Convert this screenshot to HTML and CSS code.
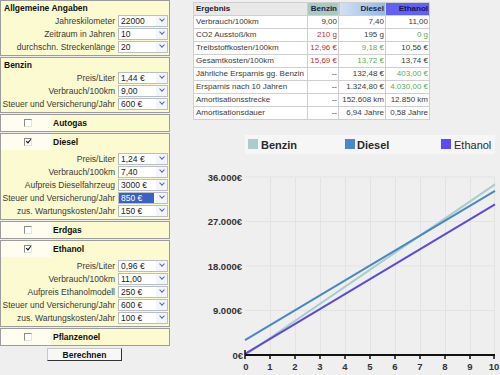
FILE: index.html
```html
<!DOCTYPE html>
<html lang="de">
<head>
    <meta charset="UTF-8">
    <title>Kraftstoffrechner</title>
    <link rel="stylesheet" href="styles.css">
</head>
<body>
<div class="page">
    <div class="form">
        <div class="panel">
            <h3>Allgemeine Angaben</h3>
            <div class="row"><label>Jahreskilometer</label><div class="sel"><span class="val">22000</span><span class="arrow"></span></div></div>
            <div class="row"><label>Zeitraum in Jahren</label><div class="sel"><span class="val">10</span><span class="arrow"></span></div></div>
            <div class="row"><label>durchschn. Streckenlänge</label><div class="sel"><span class="val">20</span><span class="arrow"></span></div></div>
        </div>
        <div class="panel">
            <h3>Benzin</h3>
            <div class="row"><label>Preis/Liter</label><div class="sel"><span class="val">1,44 €</span><span class="arrow"></span></div></div>
            <div class="row"><label>Verbrauch/100km</label><div class="sel"><span class="val">9,00</span><span class="arrow"></span></div></div>
            <div class="row"><label>Steuer und Versicherung/Jahr</label><div class="sel"><span class="val">600 €</span><span class="arrow"></span></div></div>
        </div>
        <div class="panel single">
            <div class="check"><span class="cb-cell"><span class="cb"></span></span><b>Autogas</b></div>
        </div>
        <div class="panel">
            <div class="check head"><span class="cb-cell"><span class="cb on"></span></span><b>Diesel</b></div>
            <div class="row"><label>Preis/Liter</label><div class="sel"><span class="val">1,24 €</span><span class="arrow"></span></div></div>
            <div class="row"><label>Verbrauch/100km</label><div class="sel"><span class="val">7,40</span><span class="arrow"></span></div></div>
            <div class="row"><label>Aufpreis Dieselfahrzeug</label><div class="sel"><span class="val">3000 €</span><span class="arrow"></span></div></div>
            <div class="row"><label>Steuer und Versicherung/Jahr</label><div class="sel"><span class="val hl">850 €</span><span class="arrow"></span></div></div>
            <div class="row"><label>zus. Wartungskosten/Jahr</label><div class="sel"><span class="val">150 €</span><span class="arrow"></span></div></div>
        </div>
        <div class="panel single">
            <div class="check"><span class="cb-cell"><span class="cb"></span></span><b>Erdgas</b></div>
        </div>
        <div class="panel">
            <div class="check head"><span class="cb-cell"><span class="cb on"></span></span><b>Ethanol</b></div>
            <div class="row"><label>Preis/Liter</label><div class="sel"><span class="val">0,96 €</span><span class="arrow"></span></div></div>
            <div class="row"><label>Verbrauch/100km</label><div class="sel"><span class="val">11,00</span><span class="arrow"></span></div></div>
            <div class="row"><label>Aufpreis Ethanolmodell</label><div class="sel"><span class="val">250 €</span><span class="arrow"></span></div></div>
            <div class="row"><label>Steuer und Versicherung/Jahr</label><div class="sel"><span class="val">600 €</span><span class="arrow"></span></div></div>
            <div class="row"><label>zus. Wartungskosten/Jahr</label><div class="sel"><span class="val">100 €</span><span class="arrow"></span></div></div>
        </div>
        <div class="panel single">
            <div class="check"><span class="cb-cell"><span class="cb"></span></span><b>Pflanzenoel</b></div>
        </div>
        <button class="calc">Berechnen</button>
    </div>

    <div class="results">
        <table class="res">
            <colgroup><col class="c-label"><col class="c-benzin"><col class="c-diesel"><col class="c-ethanol"></colgroup>
            <tr><th class="h-label">Ergebnis</th><th class="h-benzin">Benzin</th><th class="h-diesel">Diesel</th><th class="h-ethanol">Ethanol</th></tr>
            <tr><td>Verbrauch/100km</td><td>9,00</td><td>7,40</td><td>11,00</td></tr>
            <tr><td>CO2 Ausstoß/km</td><td class="bad">210 g</td><td>195 g</td><td class="good">0 g</td></tr>
            <tr><td>Treibstoffkosten/100km</td><td class="bad">12,96 €</td><td class="good">9,18 €</td><td>10,56 €</td></tr>
            <tr><td>Gesamtkosten/100km</td><td class="bad">15,69 €</td><td class="good">13,72 €</td><td>13,74 €</td></tr>
            <tr><td>Jährliche Ersparnis gg. Benzin</td><td>--</td><td>132,48 €</td><td class="good">403,00 €</td></tr>
            <tr><td>Ersparnis nach 10 Jahren</td><td>--</td><td>1.324,80 €</td><td class="good">4.030,00 €</td></tr>
            <tr><td>Amortisationsstrecke</td><td>--</td><td>152.608 km</td><td>12.850 km</td></tr>
            <tr><td>Amortisationsdauer</td><td>--</td><td>6,94 Jahre</td><td>0,58 Jahre</td></tr>
        </table>

        <svg class="chart" width="310" height="245" viewBox="0 0 310 245">
            <!-- legend -->
            <rect x="55" y="6" width="250" height="19" fill="#f6f6f6"/>
            <rect x="58" y="10" width="10" height="10" fill="#a9cccc"/>
            <text x="71" y="19.5" class="lg b">Benzin</text>
            <rect x="155" y="10" width="10" height="10" fill="#4a88cc"/>
            <text x="167" y="19.5" class="lg b">Diesel</text>
            <rect x="251" y="10" width="10" height="10" fill="#5a4cf0"/>
            <text x="264" y="19.5" class="lg">Ethanol</text>

            <!-- grid -->
            <g stroke="#e3e3e3" stroke-width="1">
                <line x1="55" y1="48" x2="305" y2="48"/>
                <line x1="55" y1="92.5" x2="305" y2="92.5"/>
                <line x1="55" y1="137" x2="305" y2="137"/>
                <line x1="55" y1="181.5" x2="305" y2="181.5"/>
                <line x1="80.5" y1="48" x2="80.5" y2="226"/>
                <line x1="105.5" y1="48" x2="105.5" y2="226"/>
                <line x1="130.5" y1="48" x2="130.5" y2="226"/>
                <line x1="155.5" y1="48" x2="155.5" y2="226"/>
                <line x1="180.5" y1="48" x2="180.5" y2="226"/>
                <line x1="205.5" y1="48" x2="205.5" y2="226"/>
                <line x1="230.5" y1="48" x2="230.5" y2="226"/>
                <line x1="255.5" y1="48" x2="255.5" y2="226"/>
                <line x1="280.5" y1="48" x2="280.5" y2="226"/>
                <line x1="304.5" y1="48" x2="304.5" y2="226"/>
            </g>

            <!-- y labels -->
            <g class="ax" text-anchor="end">
                <text x="52" y="52">36.000€</text>
                <text x="52" y="96">27.000€</text>
                <text x="52" y="141">18.000€</text>
                <text x="52" y="185">9.000€</text>
                <text x="53" y="230">0€</text>
            </g>

            <!-- data -->
            <line x1="55" y1="226" x2="305" y2="55.3" stroke="#a9cccc" stroke-width="2"/>
            <line x1="55" y1="211.2" x2="305" y2="61.9" stroke="#4a88c4" stroke-width="2"/>
            <line x1="55" y1="224.8" x2="305" y2="75.3" stroke="#5a4cd8" stroke-width="2"/>

            <!-- x axis -->
            <line x1="55" y1="226" x2="305" y2="226" stroke="#111" stroke-width="2"/>
            <g stroke="#111" stroke-width="1.5">
                <line x1="55" y1="221" x2="55" y2="230"/>
                <line x1="80" y1="226" x2="80" y2="230"/>
                <line x1="105" y1="226" x2="105" y2="230"/>
                <line x1="130" y1="226" x2="130" y2="230"/>
                <line x1="155" y1="226" x2="155" y2="230"/>
                <line x1="180" y1="226" x2="180" y2="230"/>
                <line x1="205" y1="226" x2="205" y2="230"/>
                <line x1="230" y1="226" x2="230" y2="230"/>
                <line x1="255" y1="226" x2="255" y2="230"/>
                <line x1="280" y1="226" x2="280" y2="230"/>
                <line x1="304" y1="226" x2="304" y2="230"/>
            </g>
            <g class="ax" text-anchor="middle">
                <text x="56" y="241">0</text>
                <text x="80" y="241">1</text>
                <text x="105" y="241">2</text>
                <text x="130" y="241">3</text>
                <text x="155" y="241">4</text>
                <text x="180" y="241">5</text>
                <text x="205" y="241">6</text>
                <text x="230" y="241">7</text>
                <text x="255" y="241">8</text>
                <text x="280" y="241">9</text>
                <text x="304" y="241">10</text>
            </g>
        </svg>
    </div>
</div>
</body>
</html>
```

FILE: styles.css
```css
/* Page */
body {
    margin: 0;
    background-color: #efefef;
    color: #3a3a3a;
    font-family: "Liberation Sans", Arial, sans-serif;
    font-size: 8.5px;
    overflow: hidden;
}

.page {
    display: flex;
    align-items: flex-start;
    gap: 20px;
}

/* Input form */
.form {
    width: 170px;
    display: flex;
    flex-direction: column;
    gap: 1px;
}

.panel {
    background-color: #fcfad0;
    border: 1px solid #9c9c9c;
    padding: 1px 1px 2px 1px;
}

.panel.single {
    padding: 0;
}

.panel h3 {
    margin: 0;
    height: 12px;
    line-height: 12px;
    padding-left: 2px;
    font-size: 8.5px;
    font-weight: bold;
    color: #111;
}

.row {
    display: flex;
    align-items: center;
    height: 13px;
}

.row label {
    flex: 1;
    text-align: right;
    padding-right: 3px;
    white-space: nowrap;
}

.sel {
    width: 50px;
    height: 12px;
    box-sizing: border-box;
    display: flex;
    background-color: #ffffff;
    border: 1px solid #b9bdc4;
}

.sel .val {
    flex: 1;
    padding-left: 2px;
    line-height: 10px;
    color: #222;
}

.sel .val.hl {
    background-color: #3a62c0;
    color: #ffffff;
    margin-right: 2px;
}

.sel .arrow {
    width: 11px;
    display: flex;
    align-items: center;
    justify-content: center;
    background-color: #f2f5fc;
}

.sel .arrow::after {
    content: "";
    width: 3px;
    height: 3px;
    margin-top: -3px;
    border-right: 1.5px solid #4d6cb8;
    border-bottom: 1.5px solid #4d6cb8;
    transform: rotate(45deg);
}

/* Checkbox rows */
.check {
    display: flex;
    align-items: center;
    height: 16px;
}

.panel .check.head {
    margin: -1px -1px 2px -1px;
}

.cb-cell {
    width: 50px;
    align-self: stretch;
    display: flex;
    align-items: center;
    padding-left: 23px;
    box-sizing: border-box;
    background-color: #fefdf0;
}

.cb {
    position: relative;
    width: 8px;
    height: 8px;
    box-sizing: border-box;
    background-color: #ffffff;
    border-top: 1px solid #8a8a8a;
    border-left: 1px solid #8a8a8a;
    border-right: 1px solid #e4e4e4;
    border-bottom: 1px solid #e4e4e4;
}

.cb.on::after {
    content: "";
    position: absolute;
    left: 2px;
    top: -1px;
    width: 2px;
    height: 4px;
    border-right: 1.5px solid #111;
    border-bottom: 1.5px solid #111;
    transform: rotate(40deg);
}

.check b {
    padding-left: 2px;
    color: #111;
}

.calc {
    align-self: flex-start;
    margin: 1px 0 0 47px;
    width: 75px;
    height: 13px;
    padding: 0;
    font-family: inherit;
    font-size: 8.5px;
    font-weight: bold;
    color: #111;
    background-color: #f7f7f7;
    border: 1px solid;
    border-color: #c8c8c8 #333333 #333333 #c8c8c8;
}

/* Results */
.results {
    display: flex;
    flex-direction: column;
    padding-top: 2px;
}

.res {
    margin-left: 3px;
    border-collapse: collapse;
    table-layout: fixed;
    width: 236px;
    font-size: 8px;
    background-color: #ffffff;
    border: 1px solid #a8a8a8;
}

.c-label { width: 114px; }
.c-benzin { width: 31px; }
.c-diesel { width: 47px; }
.c-ethanol { width: 44px; }

.res th,
.res td {
    height: 12px;
    padding: 0 1px;
    border: 1px solid #cfcfcf;
    white-space: nowrap;
    text-align: right;
    line-height: 12px;
    overflow: hidden;
}

.res td:first-child {
    text-align: left;
    padding-left: 2px;
}

.res th {
    font-weight: bold;
    color: #16244a;
}

.res .h-label {
    text-align: left;
    padding-left: 2px;
    background-color: #e8e8e8;
    color: #222;
}

.res .h-benzin { background-color: #a9c9c1; }
.res .h-diesel { background: linear-gradient(to right, #d2e2f2, #93b7e2); }
.res .h-ethanol { background-color: #6262ee; color: #121260; }

.bad { color: #b83434; }
.good { color: #5aae5a; }

/* Chart */
.chart {
    display: block;
    margin-top: 9px;
    font-family: "Liberation Sans", Arial, sans-serif;
}

.chart .lg {
    font-size: 11px;
    fill: #2a2a2a;
}

.chart .lg.b {
    font-size: 11px;
    font-weight: bold;
}

.chart .ax text {
    font-size: 9.5px;
    font-weight: bold;
    fill: #333;
}
```
